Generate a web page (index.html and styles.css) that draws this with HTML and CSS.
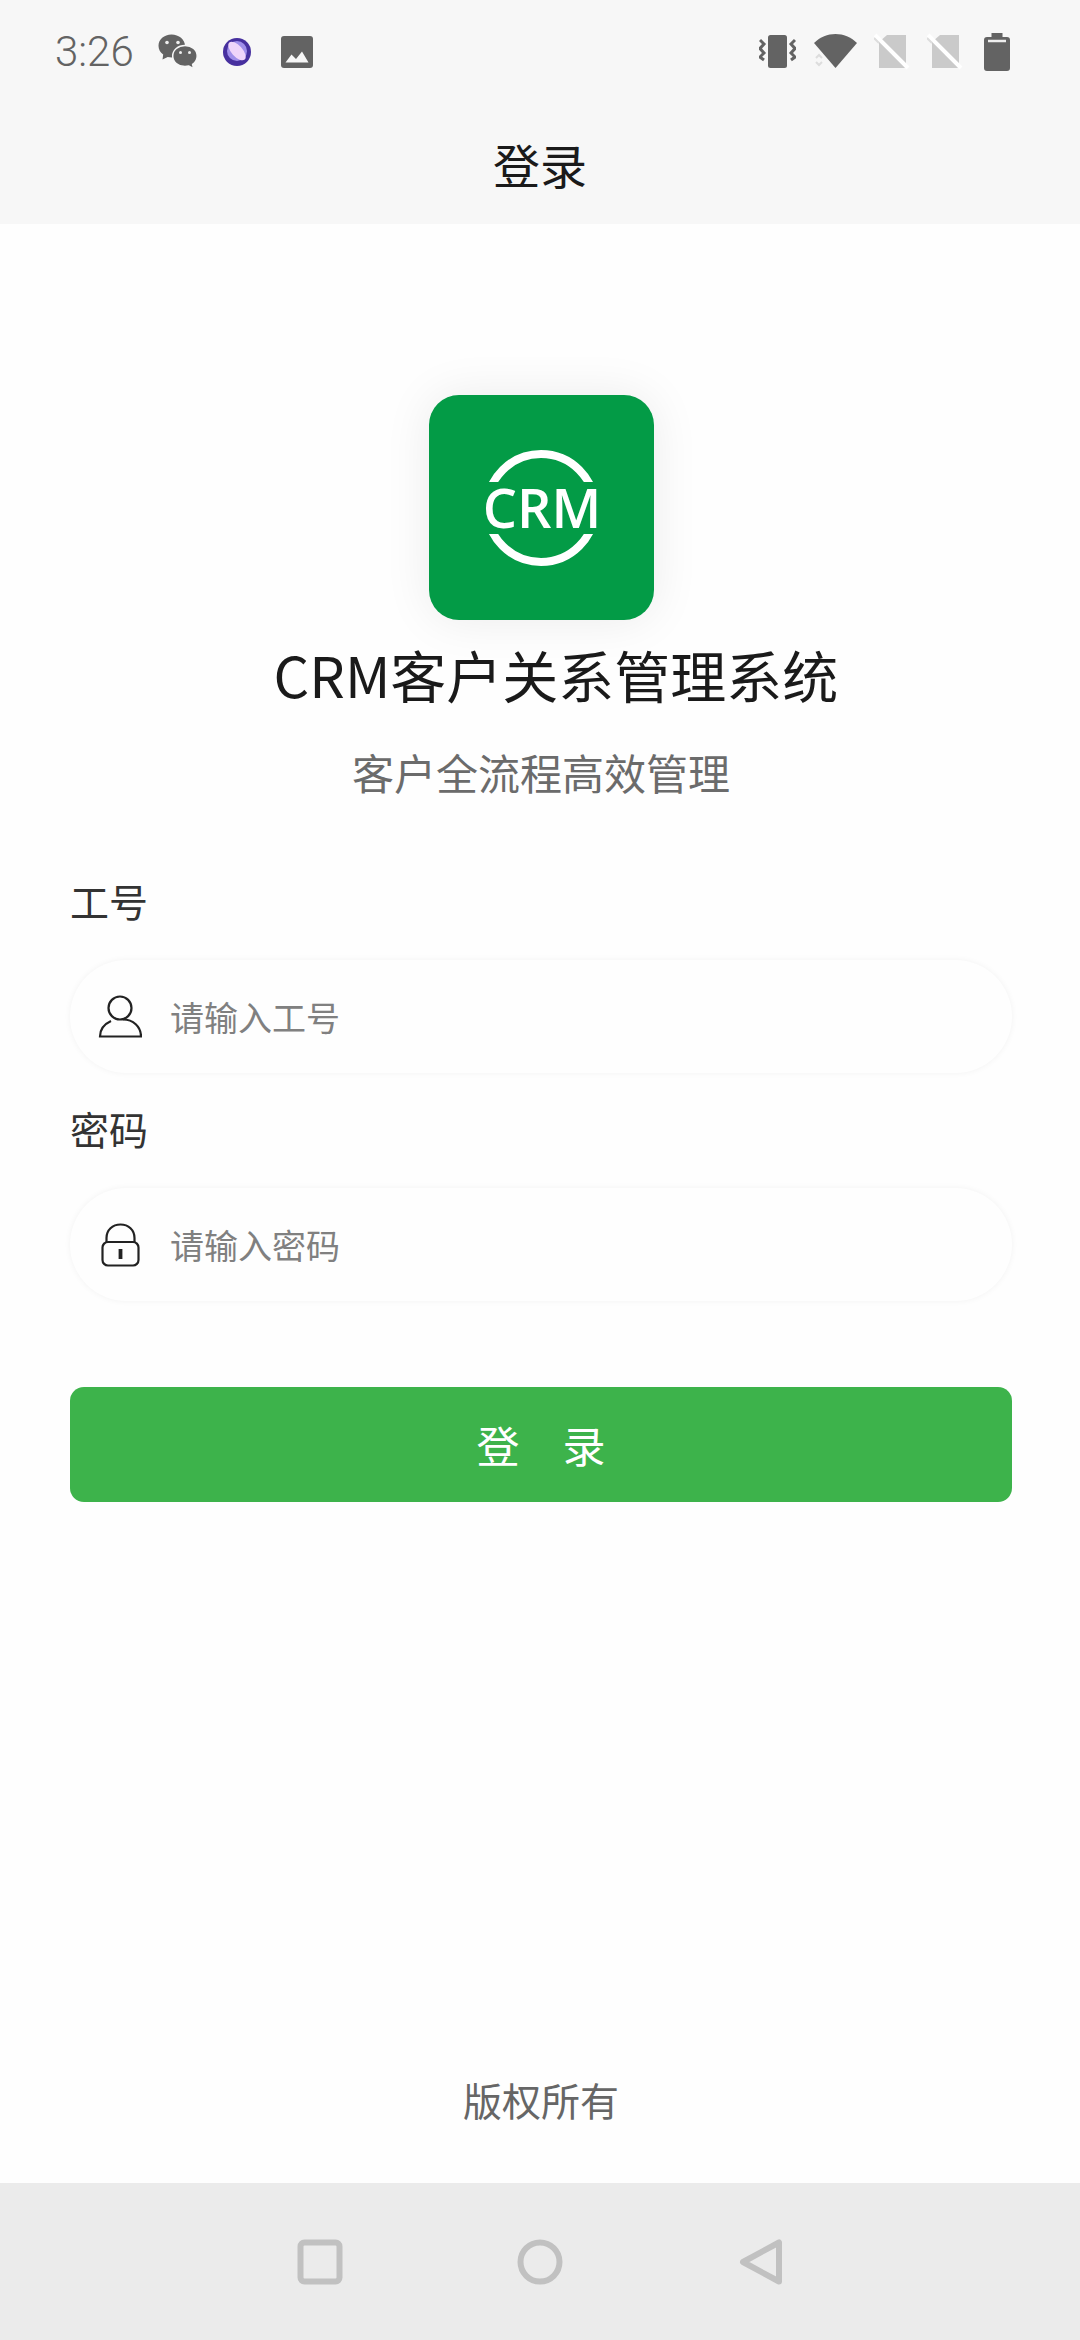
FILE: index.html
```html
<!DOCTYPE html>
<html lang="zh-CN">
<head>
<meta charset="utf-8">
<meta name="viewport" content="width=device-width, initial-scale=1">
<title>登录</title>
<link rel="stylesheet" href="styles.css">
</head>
<body>
<div class="screen">
  <div class="status-bar">
    <div class="status-left">
      <span class="clock">3:26</span>
      <svg class="wechat" width="40" height="36" viewBox="0 0 40 36" aria-hidden="true">
        <path fill="#636363" d="M13.500 0.500C6 .5.500 5.500.500 11.700c0 3.600 1.700 6.600 4.700 8.700L4.500 25.500l5.200-2.600c1.300.3 2.600.5 4 .5C20.800 23.400 27 18.500 27 11.800 27 5.500 21 .5 13.500.5z"/>
        <path fill="#636363" stroke="#f7f7f7" stroke-width="1.500" d="M27 11.500c-7 0-12.300 4.600-12.300 10.500S20 32.600 27 32.600c1.300 0 2.600-.2 3.800-.5l4.800 2.600-1-4.300c3-2 4.600-4.900 4.600-8.400C39.200 16.100 34 11.500 27 11.500z"/>
        <g fill="#eee"><circle cx="9" cy="8.500" r="1.800"/><circle cx="20" cy="8.500" r="1.800"/><circle cx="22.500" cy="18.500" r="1.500"/><circle cx="31.500" cy="18.500" r="1.500"/></g>
      </svg>
      <svg class="planet" width="30" height="30" viewBox="0 0 30 30" aria-hidden="true">
        <circle cx="15" cy="15" r="14" fill="#47309f"/>
        <circle cx="15" cy="14" r="10" fill="#a08fea"/>
        <ellipse cx="15" cy="14" rx="11.500" ry="5.500" fill="#efd5fa" transform="rotate(48 15 14)"/>
      </svg>
      <svg width="32" height="32" viewBox="0 0 32 32" aria-hidden="true">
        <rect width="32" height="32" rx="3" fill="#636363"/>
        <path d="M4.500 26.500l6-8 4.500 4.500 6-7.500 6.500 11z" fill="#f7f7f7"/>
      </svg>
    </div>
    <div class="status-right">
      <svg width="37" height="38" viewBox="0 0 37 38" aria-hidden="true">
        <rect x="9" y="2" width="19" height="33" rx="2.500" fill="#636363"/>
        <path d="M1 8l4 4-4 4.500 4 4.500-4 4 4 3M36 8l-4 4 4 4.500-4 4.500 4 4-4 3" transform="translate(0 -1)" fill="none" stroke="#636363" stroke-width="3"/>
      </svg>
      <svg class="wifi" width="43" height="38" viewBox="0 0 43 38" aria-hidden="true">
        <path d="M0 10C12-2 31-2 43 10L21.500 35z" fill="#636363"/>
        <path d="M2 25l3-3 3 3M2 29l3 3 3-3" fill="none" stroke="#ddd" stroke-width="2"/>
      </svg>
      <svg class="sim" width="36" height="38" viewBox="0 0 36 38" aria-hidden="true">
        <path d="M5 9l8-7h19v33H5z" fill="#cacaca"/>
        <path d="M1 2l33 33" stroke="#fff" stroke-width="4"/>
        <path d="M0 5l5 5" stroke="#ddd" stroke-width="2"/>
      </svg>
      <svg class="sim-second" width="36" height="38" viewBox="0 0 36 38" aria-hidden="true">
        <path d="M5 9l8-7h19v33H5z" fill="#cacaca"/>
        <path d="M1 2l33 33" stroke="#fff" stroke-width="4"/>
        <path d="M0 5l5 5" stroke="#ddd" stroke-width="2"/>
      </svg>
      <svg width="26" height="38" viewBox="0 0 26 38" aria-hidden="true">
        <path d="M7.500 0h11v4H23q3 0 3 3v28q0 3-3 3H3q-3 0-3-3V7q0-3 3-3h4.500z" fill="#636363"/>
        <path d="M4 8h18" stroke="#eee" stroke-width="2.500"/>
      </svg>
    </div>
  </div>

  <header class="title-bar"><h1 class="page-title">登录</h1></header>

  <main class="content">
    <svg class="logo" width="225" height="225" viewBox="0 0 225 225" role="img" aria-label="CRM">
      <defs><clipPath id="arcs"><path d="M0 0H225V87H0zM0 139H225V225H0z"/></clipPath></defs>
      <circle cx="112" cy="113" r="54" fill="none" stroke="#fff" stroke-width="8" clip-path="url(#arcs)"/>
      <text class="logo-text" x="113" y="133" text-anchor="middle">CRM</text>
    </svg>
    <h2 class="app-name">CRM客户关系管理系统</h2>
    <p class="tagline">客户全流程高效管理</p>

    <form class="login-form">
      <label class="field-label" for="staff-id">工号</label>
      <div class="field">
        <svg width="44" height="44" viewBox="0 0 44 44" fill="none" stroke="#222" stroke-width="2.200" aria-hidden="true">
          <circle cx="22" cy="13" r="11.500"/>
          <path d="M13 26C6.500 29 2 34 2 41.500h41C43 31.500 35 24.500 25 24.500"/>
        </svg>
        <input class="field-input" id="staff-id" type="text" placeholder="请输入工号">
      </div>
      <label class="field-label" for="password">密码</label>
      <div class="field">
        <svg width="44" height="44" viewBox="0 0 44 44" fill="none" stroke="#222" stroke-width="2.200" aria-hidden="true">
          <rect x="4.500" y="19" width="36" height="23.500" rx="5.500"/>
          <path d="M8.500 19V15C8.500 7 14.500 1.500 22.500 1.500S36.500 7 36.500 15v4"/>
          <path d="M22.500 26v10" stroke-width="3.800"/>
        </svg>
        <input class="field-input" id="password" type="password" placeholder="请输入密码">
      </div>
      <button class="submit" type="submit">登　录</button>
    </form>

    <footer class="copyright">版权所有</footer>
  </main>

  <nav class="nav-bar" aria-label="系统导航">
    <button class="nav-button" type="button" aria-label="最近任务">
      <svg width="46" height="46" viewBox="0 0 46 46"><rect x="3.500" y="3.500" width="39" height="39" rx="4" /></svg>
    </button>
    <button class="nav-button" type="button" aria-label="主页">
      <svg width="46" height="46" viewBox="0 0 46 46"><circle cx="23" cy="23" r="19.500"/></svg>
    </button>
    <button class="nav-button" type="button" aria-label="返回">
      <svg width="46" height="46" viewBox="0 0 46 46"><path d="M6 23L42 3.500v39z"/></svg>
    </button>
  </nav>
</div>
</body>
</html>
```
FILE: styles.css
```css
* {
  box-sizing: border-box;
}

body {
  margin: 0;
  background: #fefefe;
  color: #1a1a1a;
  font-family: "Noto Sans CJK SC", sans-serif;
}

h1,
h2,
p {
  margin: 0;
  font-weight: 400;
}

svg {
  display: block;
  flex: none;
}

button,
input {
  font-family: inherit;
}

.screen {
  display: flex;
  flex-direction: column;
  min-height: 100vh;
}

/* System status bar */
.status-bar {
  display: flex;
  justify-content: space-between;
  align-items: center;
  height: 104px;
  padding: 0 70px 0 55px;
  background: #f7f7f7;
}

.status-left,
.status-right {
  display: flex;
  align-items: center;
}

.clock {
  width: 103px;
  color: #636363;
  font: 300 42px/48px Roboto, sans-serif;
}

.wechat {
  margin-right: 24px;
}

.planet {
  margin-right: 29px;
}

.wifi {
  margin: 0 17px 0 18px;
}

.sim {
  margin-right: 17px;
}

.sim-second {
  margin-right: 21px;
}

/* Page title */
.title-bar {
  height: 120px;
  background: #f7f7f7;
  text-align: center;
}

.page-title {
  font-size: 47px;
  line-height: 120px;
}

/* Login page */
.content {
  display: flex;
  flex: 1;
  flex-direction: column;
  align-items: center;
  padding: 171px 68px 54px 70px;
}

.logo {
  border-radius: 30px;
  background: #039b46;
  box-shadow: 0 0 48px rgba(0, 0, 0, 0.08);
}

.logo-text {
  fill: #fff;
  font: 600 54px "Open Sans", sans-serif;
}

.app-name {
  margin-top: 14px;
  padding-left: 30px;
  font-size: 56px;
  line-height: 80px;
}

.tagline {
  margin-top: 28px;
  color: #6b6b6b;
  font-size: 42px;
  line-height: 60px;
}

.login-form {
  display: flex;
  flex-direction: column;
  width: 100%;
  margin-top: 43px;
}

.field-label {
  align-self: flex-start;
  padding-top: 25px;
  color: #333;
  font-size: 39px;
  line-height: 60px;
}

.field {
  display: flex;
  align-items: center;
  gap: 28px;
  height: 113px;
  margin-top: 30px;
  padding: 0 28px;
  border-radius: 57px;
  background: #fefefe;
  box-shadow: 0 0 6px rgba(0, 0, 0, 0.05);
}

.field-input {
  flex: 1;
  min-width: 0;
  padding: 0;
  border: 0;
  outline: 0;
  background: transparent;
  color: #333;
  font-size: 34px;
  line-height: 50px;
}

.field-input::placeholder {
  color: #808080;
  opacity: 1;
}

.submit {
  height: 115px;
  margin-top: 86px;
  padding: 0;
  border: 0;
  border-radius: 14px;
  background: #3db34b;
  color: #fff;
  font-size: 43px;
  line-height: 115px;
}

.copyright {
  margin-top: auto;
  color: #666;
  font-size: 39px;
  line-height: 60px;
}

/* System navigation bar */
.nav-bar {
  display: grid;
  grid-template-columns: repeat(3, 220px);
  justify-content: center;
  height: 157px;
  background: #ebebeb;
}

.nav-button {
  display: flex;
  align-items: center;
  justify-content: center;
  padding: 0;
  border: 0;
  background: none;
}

.nav-button svg {
  fill: none;
  stroke: #c1c1c1;
  stroke-width: 6;
  stroke-linejoin: round;
}
```
